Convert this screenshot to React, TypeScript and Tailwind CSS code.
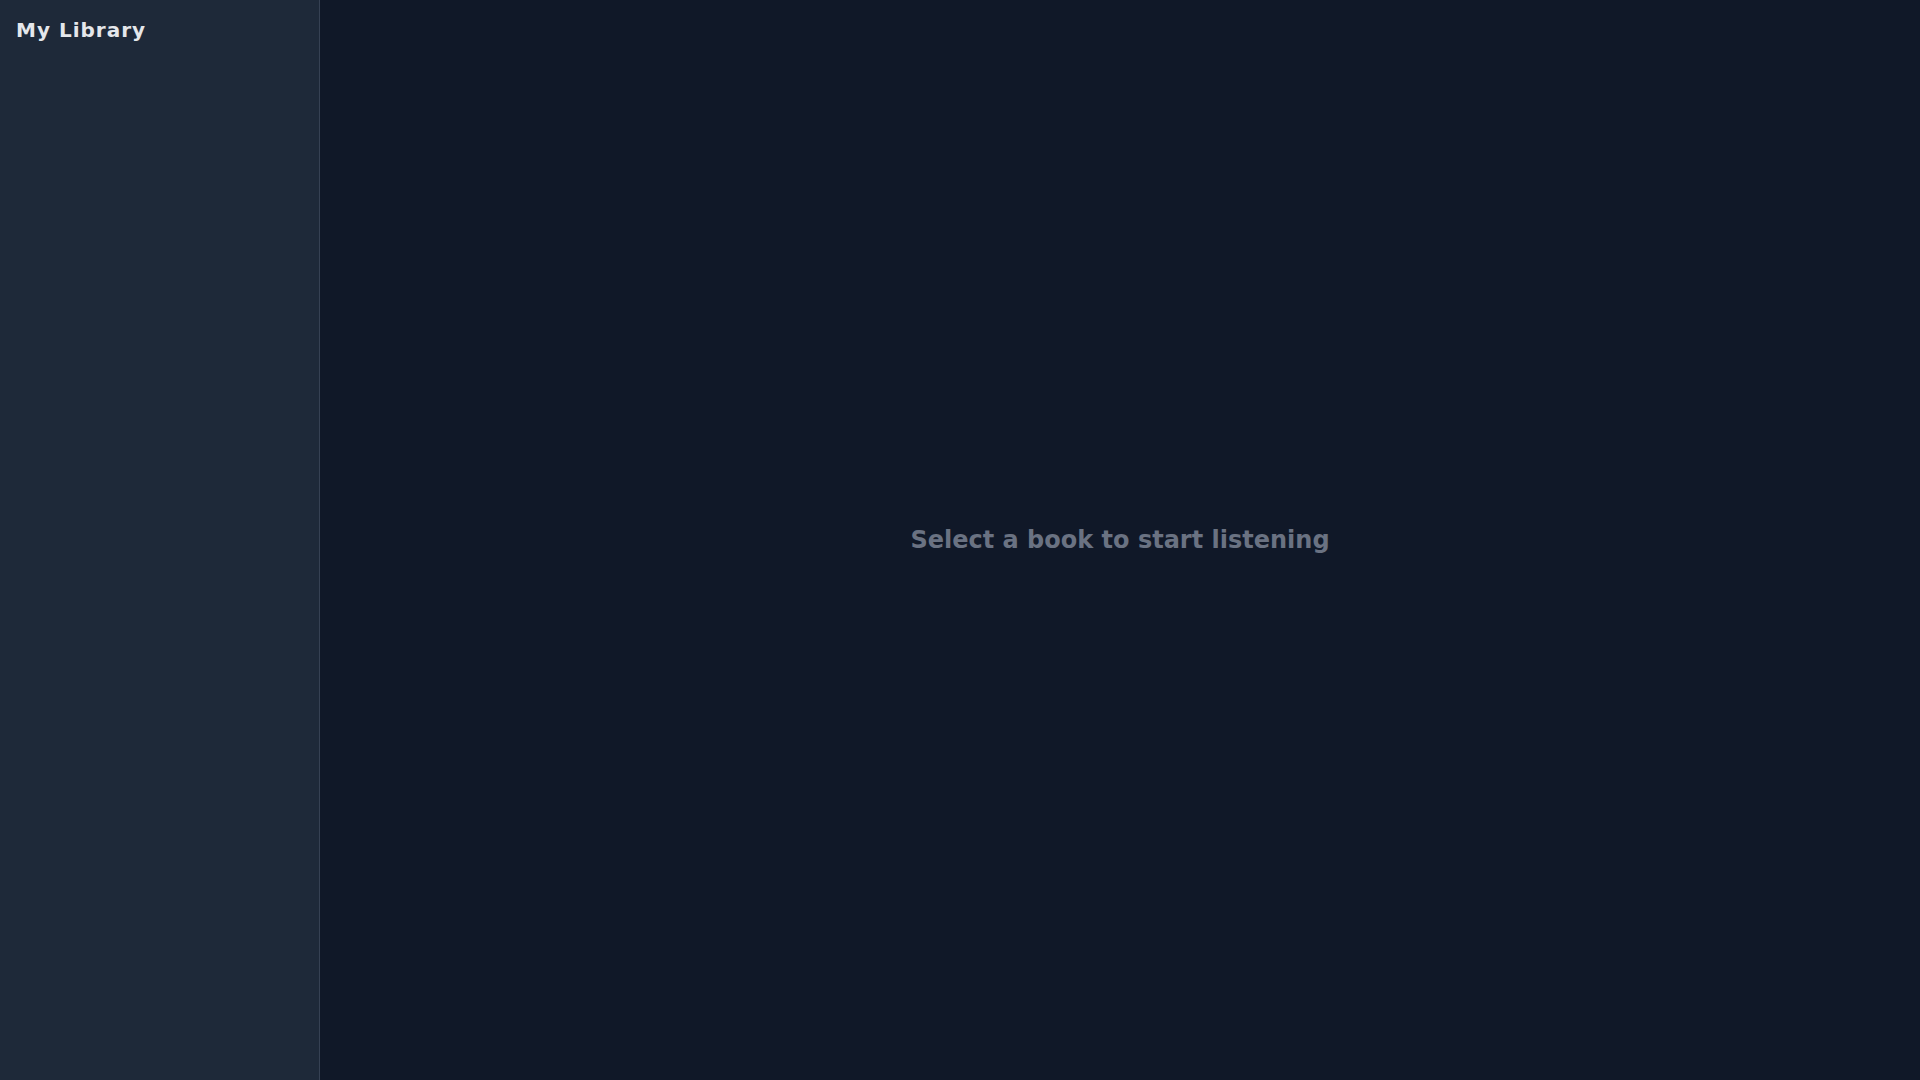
export default function App() {
  return (
    <div
      className="flex h-screen w-full overflow-hidden bg-gray-900"
      style={{ fontFamily: '"DejaVu Sans", sans-serif' }}
    >
      {/* Sidebar */}
      <aside className="w-80 shrink-0 bg-gray-800 border-r border-gray-700 flex flex-col">
        <div className="p-4">
          <h1 className="text-xl font-bold tracking-wider text-gray-200">My Library</h1>
        </div>
      </aside>

      {/* Main */}
      <main className="flex-1 flex items-center justify-center">
        <p className="text-2xl font-bold text-gray-500">Select a book to start listening</p>
      </main>
    </div>
  )
}
